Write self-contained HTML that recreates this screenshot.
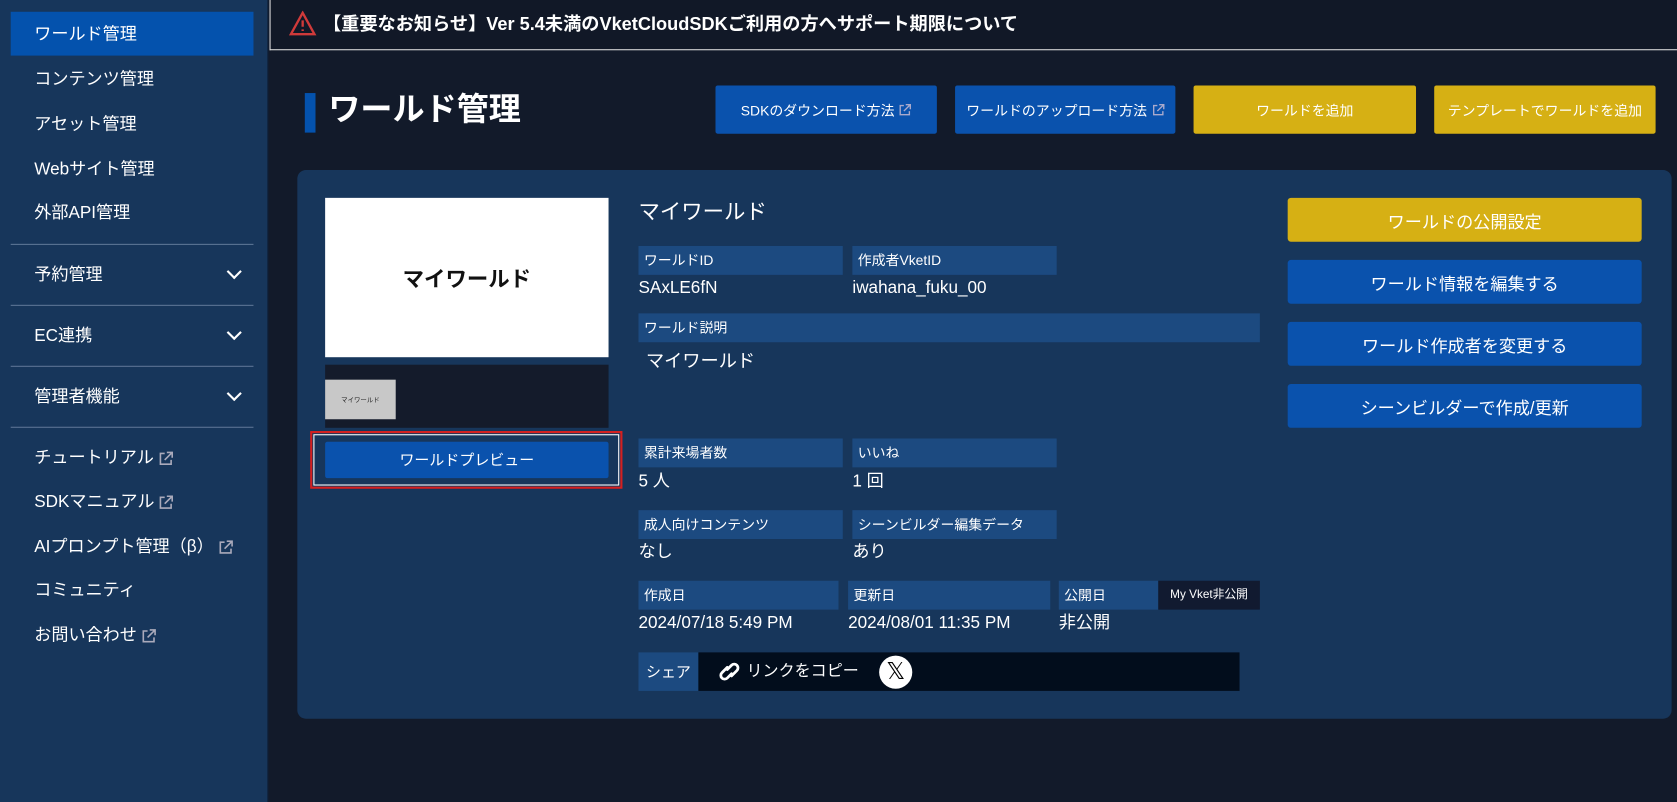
<!DOCTYPE html>
<html><head><meta charset="utf-8"><style>
*{box-sizing:border-box;margin:0;padding:0}
html,body{width:1677px;height:802px;overflow:hidden;background:#121a2a}
#w{width:1568px;height:750px;transform:scale(1.0695);transform-origin:0 0;position:relative;font-family:"Liberation Sans","Noto Sans CJK JP",sans-serif;color:#fff;background:#121a2a}
.a{position:absolute}
#sb{left:0;top:0;width:251px;height:750px;background:#17365b;border-right:1px solid #0e1d33}
.it{position:absolute;left:32px;font-size:16px;line-height:20px;margin-top:2px}
.dv{position:absolute;left:10px;width:227px;height:1px;background:#5d7595}
.chev{position:absolute;left:214px;width:10px;height:10px;border-right:2px solid #fff;border-bottom:2px solid #fff;transform:rotate(45deg)}
.btn{position:absolute;display:flex;align-items:center;justify-content:center;font-size:13px;border-radius:2px}
.bl{background:#0a52ad}.yl{background:#d6b014}
.lb{position:absolute;background:#1c4a80;font-size:13px;line-height:27px;padding-left:5px;height:27px}
.vl{position:absolute;font-size:16px;line-height:20px}
.rb{position:absolute;left:1204px;width:331px;height:41px;display:flex;align-items:center;justify-content:center;font-size:16px;border-radius:3px}
.ext{display:inline-block;vertical-align:middle;margin-left:4px}
</style></head><body><div id="w">
<div id="sb" class="a">
<div class="a" style="left:10px;top:11px;width:227px;height:41px;background:#0452ad"></div>
<div class="it" style="top:21px">ワールド管理</div>
<div class="it" style="top:63px">コンテンツ管理</div>
<div class="it" style="top:105px">アセット管理</div>
<div class="it" style="top:147px">Webサイト管理</div>
<div class="it" style="top:188px">外部API管理</div>
<div class="dv" style="top:228px"></div>
<div class="it" style="top:246px">予約管理</div><div class="chev" style="top:249px"></div>
<div class="dv" style="top:285px"></div>
<div class="it" style="top:303px">EC連携</div><div class="chev" style="top:306px"></div>
<div class="dv" style="top:342px"></div>
<div class="it" style="top:360px">管理者機能</div><div class="chev" style="top:363px"></div>
<div class="dv" style="top:399px"></div>
<div class="it" style="top:417px">チュートリアル<svg class="ext" width="14" height="14" viewBox="0 0 14 14" fill="none" stroke="#aab" stroke-width="1.5"><path d="M6 2H2v10h10V8M8 1h5v5M13 1L6 8"/></svg></div>
<div class="it" style="top:458px">SDKマニュアル<svg class="ext" width="14" height="14" viewBox="0 0 14 14" fill="none" stroke="#aab" stroke-width="1.5"><path d="M6 2H2v10h10V8M8 1h5v5M13 1L6 8"/></svg></div>
<div class="it" style="top:500px">AIプロンプト管理（β）<svg class="ext" width="14" height="14" viewBox="0 0 14 14" fill="none" stroke="#aab" stroke-width="1.5"><path d="M6 2H2v10h10V8M8 1h5v5M13 1L6 8"/></svg></div>
<div class="it" style="top:541px">コミュニティ</div>
<div class="it" style="top:583px">お問い合わせ<svg class="ext" width="14" height="14" viewBox="0 0 14 14" fill="none" stroke="#aab" stroke-width="1.5"><path d="M6 2H2v10h10V8M8 1h5v5M13 1L6 8"/></svg></div>
</div>
<div class="a" style="left:252px;top:0;width:1316px;height:47px;border-left:1px solid #ddd;border-bottom:1px solid #ddd;background:#111827"></div>
<svg class="a" style="left:270px;top:10px" width="26" height="24" viewBox="0 0 26 24" fill="none" stroke="#d03a3a" stroke-width="2.2"><path d="M13 2L24 22H2Z"/><path d="M13 9v6M13 17.5v1.5"/></svg>
<div class="a" style="left:302px;top:12px;font-size:17px;font-weight:bold;line-height:22px">【重要なお知らせ】Ver 5.4未満のVketCloudSDKご利用の方へサポート期限について</div>
<div class="a" style="left:285px;top:87px;width:10px;height:37px;background:#0452ad"></div>
<div class="a" style="left:307px;top:85px;font-size:30px;font-weight:bold;line-height:36px">ワールド管理</div>
<div class="btn bl" style="left:669px;top:80px;width:207px;height:45px">SDKのダウンロード方法<svg class="ext" width="12" height="12" viewBox="0 0 14 14" fill="none" stroke="#aac" stroke-width="1.5"><path d="M6 2H2v10h10V8M8 1h5v5M13 1L6 8"/></svg></div>
<div class="btn bl" style="left:893px;top:80px;width:206px;height:45px">ワールドのアップロード方法<svg class="ext" width="12" height="12" viewBox="0 0 14 14" fill="none" stroke="#aac" stroke-width="1.5"><path d="M6 2H2v10h10V8M8 1h5v5M13 1L6 8"/></svg></div>
<div class="btn yl" style="left:1116px;top:80px;width:208px;height:45px">ワールドを追加</div>
<div class="btn yl" style="left:1341px;top:80px;width:207px;height:45px">テンプレートでワールドを追加</div>
<div class="a" style="left:278px;top:159px;width:1285px;height:513px;background:#17365b;border-radius:8px"></div>
<div class="a" style="left:304px;top:185px;width:265px;height:149px;background:#fff;color:#111;font-weight:bold;font-size:20px;display:flex;align-items:center;justify-content:center">マイワールド</div>
<div class="a" style="left:304px;top:341px;width:265px;height:59px;background:#141b2b"></div>
<div class="a" style="left:304px;top:355px;width:66px;height:37px;background:#c8c8c8;color:#222;font-size:6px;display:flex;align-items:center;justify-content:center">マイワールド</div>
<div class="a" style="left:290px;top:403px;width:292px;height:54px;border:2px solid #d42020;outline:1px solid #fff;outline-offset:-4px"></div>
<div class="btn bl" style="left:304px;top:413px;width:265px;height:34px;font-size:14px">ワールドプレビュー</div>
<div class="a" style="left:597px;top:187px;font-size:20px;line-height:24px">マイワールド</div>
<div class="lb" style="left:597px;top:230px;width:191px">ワールドID</div>
<div class="lb" style="left:797px;top:230px;width:191px">作成者VketID</div>
<div class="vl" style="left:597px;top:260px">SAxLE6fN</div>
<div class="vl" style="left:797px;top:260px">iwahana_fuku_00</div>
<div class="lb" style="left:597px;top:293px;width:581px">ワールド説明</div>
<div class="vl" style="left:604px;top:328px;font-size:17px">マイワールド</div>
<div class="lb" style="left:597px;top:410px;width:191px">累計来場者数</div>
<div class="lb" style="left:797px;top:410px;width:191px">いいね</div>
<div class="vl" style="left:597px;top:441px">5 人</div>
<div class="vl" style="left:797px;top:441px">1 回</div>
<div class="lb" style="left:597px;top:477px;width:191px">成人向けコンテンツ</div>
<div class="lb" style="left:797px;top:477px;width:191px">シーンビルダー編集データ</div>
<div class="vl" style="left:597px;top:507px">なし</div>
<div class="vl" style="left:797px;top:507px">あり</div>
<div class="lb" style="left:597px;top:543px;width:187px">作成日</div>
<div class="lb" style="left:793px;top:543px;width:189px">更新日</div>
<div class="lb" style="left:990px;top:543px;width:93px">公開日</div>
<div class="a" style="left:1083px;top:543px;width:95px;height:27px;background:#111a30;font-size:11px;line-height:27px;text-align:center">My Vket非公開</div>
<div class="vl" style="left:597px;top:573px">2024/07/18 5:49 PM</div>
<div class="vl" style="left:793px;top:573px">2024/08/01 11:35 PM</div>
<div class="vl" style="left:990px;top:573px">非公開</div>
<div class="a" style="left:597px;top:610px;width:56px;height:36px;background:#1c4a80;font-size:14px;line-height:36px;text-align:center">シェア</div>
<div class="a" style="left:653px;top:610px;width:506px;height:36px;background:#020d1c"></div>
<svg class="a" style="left:669px;top:617px" width="26" height="22" viewBox="0 0 26 22" fill="none" stroke="#fff" stroke-width="2.6" stroke-linecap="round"><path d="M11 7L6 12a3.5 3.5 0 0 0 5 5l4-4"/><path d="M15 15l5-5a3.5 3.5 0 0 0-5-5l-4 4"/></svg>
<div class="a" style="left:698px;top:618px;font-size:15px;line-height:20px">リンクをコピー</div>
<div class="a" style="left:822px;top:613px;width:31px;height:31px;border-radius:50%;background:#fff;color:#000;font-size:22px;line-height:31px;text-align:center;font-family:'DejaVu Sans',sans-serif">𝕏</div>
<div class="rb yl" style="top:185px">ワールドの公開設定</div>
<div class="rb bl" style="top:243px">ワールド情報を編集する</div>
<div class="rb bl" style="top:301px">ワールド作成者を変更する</div>
<div class="rb bl" style="top:359px">シーンビルダーで作成/更新</div>
</div></body></html>
